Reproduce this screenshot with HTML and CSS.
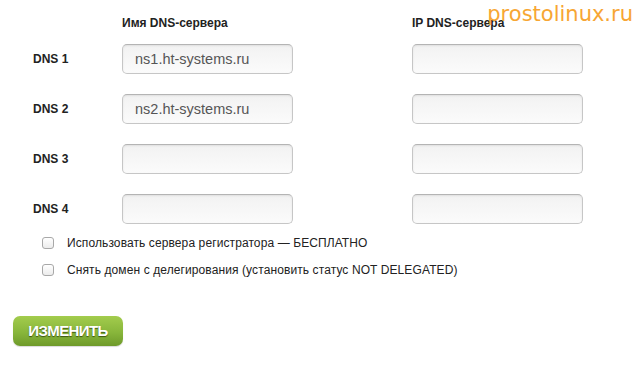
FILE: index.html
```html
<!DOCTYPE html>
<html lang="ru">
<head>
<meta charset="utf-8">
<link rel="stylesheet" href="styles.css">
</head>
<body>
<div class="page">
  <div class="watermark">prostolinux.ru</div>
  <div class="head">
    <span class="lbl"></span>
    <span class="col">Имя DNS-сервера</span>
    <span class="sp"></span>
    <span class="col">IP DNS-сервера</span>
  </div>
  <div class="row">
    <span class="lbl">DNS 1</span>
    <div class="field">ns1.ht-systems.ru</div>
    <span class="sp"></span>
    <div class="field"></div>
  </div>
  <div class="row">
    <span class="lbl">DNS 2</span>
    <div class="field">ns2.ht-systems.ru</div>
    <span class="sp"></span>
    <div class="field"></div>
  </div>
  <div class="row">
    <span class="lbl">DNS 3</span>
    <div class="field"></div>
    <span class="sp"></span>
    <div class="field"></div>
  </div>
  <div class="row">
    <span class="lbl">DNS 4</span>
    <div class="field"></div>
    <span class="sp"></span>
    <div class="field"></div>
  </div>
  <div class="checks">
    <label class="check"><span class="box"></span>Использовать сервера регистратора — БЕСПЛАТНО</label>
    <label class="check"><span class="box"></span>Снять домен с делегирования (установить статус NOT DELEGATED)</label>
  </div>
  <div class="btn">ИЗМЕНИТЬ</div>
</div>
</body>
</html>
```
FILE: styles.css
```css
html, body { margin: 0; padding: 0; background: #fff; }
body { font-family: "Liberation Sans", Arial, sans-serif; color: #222; }
.page { position: relative; width: 632px; height: 365px; overflow: hidden; }
.watermark {
  position: absolute; right: -1px; top: 0px;
  font-family: "DejaVu Sans", sans-serif; font-size: 21px; line-height: 28px;
  color: #f7a229; opacity: 0.95;
}
.head, .row { display: flex; align-items: center; padding-left: 33px; }
.head { margin-top: 16px; height: 14px; font-size: 12px; font-weight: bold; color: #222; }
.lbl { width: 89px; flex: none; font-size: 12px; font-weight: bold; color: #222; }
.col { width: 171px; flex: none; }
.sp { width: 119px; flex: none; }
.row { height: 30px; margin-top: 20px; }
.head + .row { margin-top: 14px; }
.field {
  width: 171px; height: 30px; box-sizing: border-box; flex: none;
  border: 1px solid #c6c6c6; border-top-color: #b4b4b4; border-radius: 5px;
  background: linear-gradient(#f2f2f2, #fbfbfb);
  box-shadow: inset 0 1px 2px rgba(0,0,0,0.08);
  padding-left: 12px; font-size: 14.5px; line-height: 28px; color: #555;
}
.checks { margin-top: 11px; padding-left: 42px; display: flex; flex-direction: column; gap: 11px; }
.check { display: flex; align-items: center; height: 16px; font-size: 12px; letter-spacing: 0.1px; color: #222; }
.box {
  width: 10px; height: 10px; flex: none; margin-right: 13px;
  border: 1px solid #a8a8a8; border-radius: 3px;
  background: linear-gradient(#fff, #ececec);
}
.btn {
  margin: 38px 0 0 13px; width: 110px; height: 30px; border-radius: 7px;
  background: linear-gradient(#a3cc4d, #88b63b 55%, #6e9a2a);
  box-shadow: 0 1px 1px rgba(0,0,0,0.15);
  color: #fff; font-size: 15px; font-weight: bold; letter-spacing: -0.6px; text-align: center; line-height: 30px;
  text-shadow: 0 1px 1px #3b5512;
}
```
